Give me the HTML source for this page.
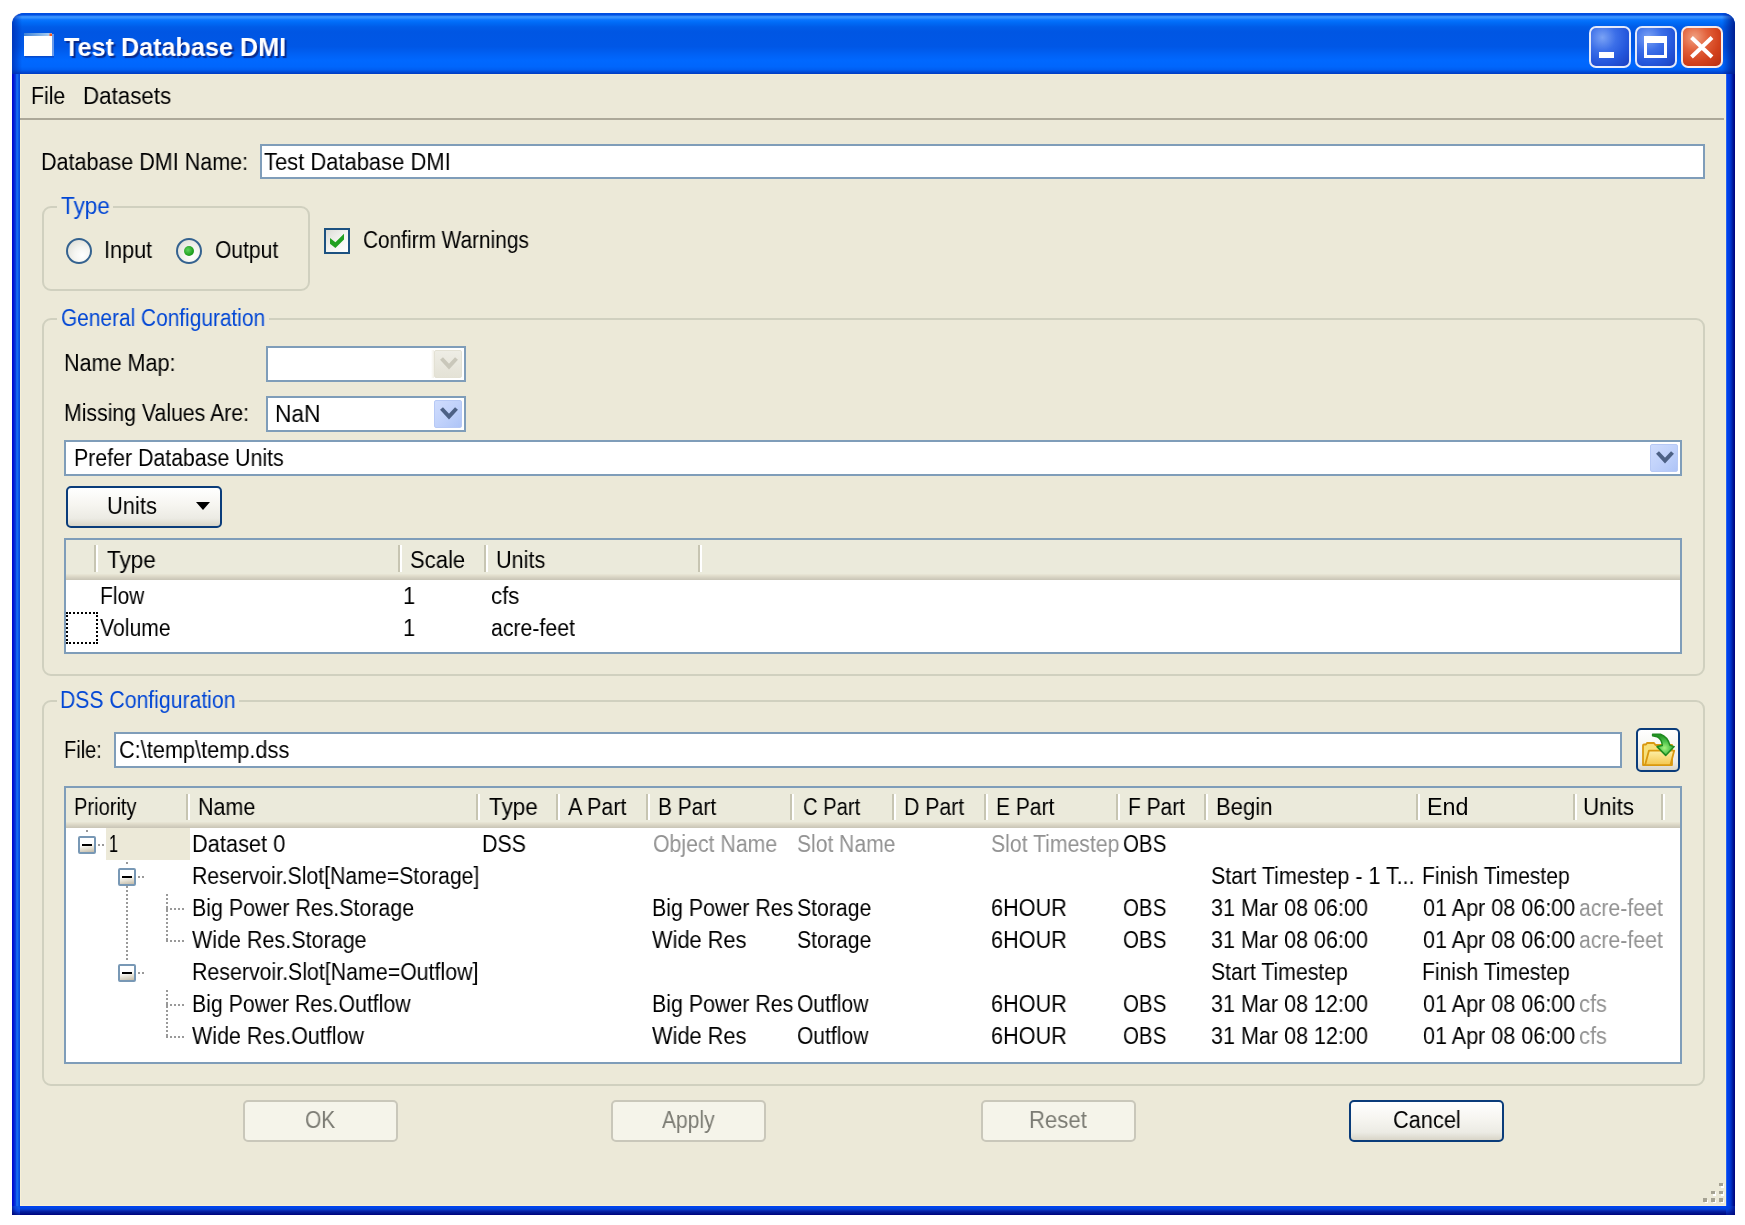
<!DOCTYPE html>
<html><head><meta charset="utf-8"><title>Test Database DMI</title>
<style>
html,body{margin:0;padding:0;}
body{width:1745px;height:1225px;background:#fff;position:relative;overflow:hidden;font-family:"Liberation Sans",sans-serif;}
body>div,body>svg,body>span{position:absolute;}
body>span{white-space:pre;transform-origin:0 0;will-change:transform;}
</style></head><body>
<div style="left:12px;top:13px;width:1723px;height:1202px;background:#0054e3;border-radius:12px 12px 0 0;"></div>
<div style="left:1726px;top:74px;width:9px;height:1141px;background:linear-gradient(to right,#3a78f0 0,#0040f0 15%,#003ee0 35%,#0032c8 55%,#001fa5 72%,#000c88 88%,#00007e 100%);"></div>
<div style="left:12px;top:74px;width:8px;height:1141px;background:linear-gradient(to right,#0006cf 0,#0019d6 20%,#0831d9 35%,#0a40de 48%,#166aee 58%,#166aee 70%,#0d55e6 82%,#0048e0 100%);"></div>
<div style="left:12px;top:1206px;width:1723px;height:9px;background:linear-gradient(to bottom,#0040f0 0,#0044ec 15%,#0042d8 35%,#0a2cb4 50%,#051ea0 62%,#00148c 80%,#00007e 100%);"></div>
<div style="left:1726px;top:1206px;width:9px;height:9px;background:radial-gradient(circle at 0 0,#0040f0 0,#0040d8 30%,#0a2cb4 50%,#051ea0 62%,#00148c 80%,#00007e 100%);"></div>
<div style="left:12px;top:1206px;width:8px;height:9px;background:radial-gradient(circle at 100% 0,#0048e0 0,#0d55e6 20%,#0a40de 45%,#0a2cb4 60%,#00148c 80%,#00007e 100%);"></div>
<div style="left:12px;top:13px;width:1723px;height:61px;background:linear-gradient(to bottom,#004ee0 0%,#0050e2 3%,#3d95ff 6%,#3391ff 8%,#0a75ff 11%,#006df8 15%,#005ce8 23%,#0056e3 31%,#0057e6 55%,#0061f5 68%,#0068ff 78%,#0066fc 88%,#005ef2 93%,#004cd8 96.5%,#003ec6 99%,#003ec6 100%);border-radius:12px 12px 0 0;"></div>
<div style="left:12px;top:13px;width:10px;height:61px;background:linear-gradient(to right,rgba(0,40,170,.7),rgba(0,60,200,0));border-radius:12px 0 0 0;"></div>
<div style="left:1722px;top:13px;width:13px;height:61px;background:linear-gradient(to left,rgba(0,20,130,.85),rgba(0,50,180,0));border-radius:0 12px 0 0;"></div>
<div style="left:20px;top:74px;width:1706px;height:1132px;background:#ece9d8;box-shadow:inset 1px -1px 0 #f8f0d6, inset -1px 1px 0 #f4edd4;"></div>
<svg style="left:23px;top:31px" width="33" height="28" viewBox="0 0 33 28"><defs><linearGradient id="ib" x1="0" x2="1" y1="0" y2="0"><stop offset="0" stop-color="#3b80d8"/><stop offset=".7" stop-color="#8fbbe9"/><stop offset="1" stop-color="#b5d3f2"/></linearGradient></defs><rect x="2" y="3" width="29" height="23.5" fill="#0a3aaf" opacity=".6"/><rect x="29" y="3" width="2" height="22" fill="#6a9bea"/><rect x="1" y="2" width="28" height="3.4" fill="url(#ib)"/><rect x="1" y="5" width="28" height="20" fill="#fff"/><rect x="26.5" y="2.5" width="2.5" height="2.5" fill="#ff5a1a"/></svg>
<div style="left:1589px;top:26px;width:42px;height:42px;background:radial-gradient(circle at 30% 25%,#7aa2f5 0,#3c6fe8 35%,#2457dc 65%,#1a3fc0 100%);border:2px solid rgba(255,255,255,.88);border-radius:7px;box-sizing:border-box;"></div>
<div style="left:1635px;top:26px;width:42px;height:42px;background:radial-gradient(circle at 30% 25%,#7aa2f5 0,#3c6fe8 35%,#2457dc 65%,#1a3fc0 100%);border:2px solid rgba(255,255,255,.88);border-radius:7px;box-sizing:border-box;"></div>
<div style="left:1681px;top:26px;width:42px;height:42px;background:radial-gradient(circle at 30% 25%,#f0a080 0,#e2603a 35%,#d2411c 65%,#b82e10 100%);border:2px solid rgba(255,255,255,.88);border-radius:7px;box-sizing:border-box;"></div>
<div style="left:1599px;top:52px;width:15px;height:6px;background:#fff;"></div>
<div style="left:1644px;top:36px;width:23px;height:22px;border:3px solid #fff;border-top-width:7px;box-sizing:border-box;"></div>
<svg style="left:1688px;top:34px" width="28" height="26" viewBox="0 0 28 26"><path d="M3.5 3.5 L24 23 M24 3.5 L3.5 23" stroke="#fff" stroke-width="4" stroke-linecap="butt"/></svg>
<div style="left:20px;top:118px;width:1704px;height:2px;background:#aca899;"></div>
<div style="left:260px;top:144px;width:1445px;height:35px;background:#fff;border:2px solid #7f9db9;box-sizing:border-box;"></div>
<div style="left:42px;top:206px;width:268px;height:85.4px;border:2px solid #d0d0bf;border-radius:9px;box-sizing:border-box;"></div>
<div style="left:57px;top:199px;width:56px;height:16px;background:#ece9d8;"></div>
<div style="left:66px;top:237.5px;width:26px;height:26px;border-radius:50%;border:2px solid #34628f;box-sizing:border-box;background:radial-gradient(circle at 65% 70%,#fff 0,#f4f4f0 40%,#d8d8d0 100%);"></div>
<div style="left:176px;top:237.5px;width:26px;height:26px;border-radius:50%;border:2px solid #34628f;box-sizing:border-box;background:radial-gradient(circle at 65% 70%,#fff 0,#f4f4f0 40%,#d8d8d0 100%);"></div>
<div style="left:184px;top:245.5px;width:10px;height:10px;border-radius:50%;background:radial-gradient(circle at 40% 40%,#5fd35f 0,#21a121 60%,#1a8a1a 100%);"></div>
<div style="left:324px;top:228px;width:26px;height:26px;border:2px solid #1c5180;box-sizing:border-box;background:linear-gradient(135deg,#dcdcd7 0,#f3f3ef 50%,#fff 100%);"></div>
<svg style="left:324px;top:228px" width="26" height="26" viewBox="0 0 26 26"><path d="M6 10 L6 15.8 L11.4 20 L20 11.4 L20 5.8 L11.4 14.3 Z" fill="#21a121"/></svg>
<div style="left:42px;top:317.5px;width:1662.5px;height:358.5px;border:2px solid #d0d0bf;border-radius:9px;box-sizing:border-box;"></div>
<div style="left:57px;top:309px;width:212px;height:18px;background:#ece9d8;"></div>
<div style="left:266px;top:346px;width:200px;height:36px;background:#fff;border:2px solid #7f9db9;box-sizing:border-box;"></div>
<div style="left:431px;top:350px;width:3px;height:28px;background:linear-gradient(to right,#fff,#f1efe6);"></div>
<div style="left:434px;top:350px;width:28px;height:28px;background:linear-gradient(to bottom,#eeede5,#e4e2d6);border-radius:2px;border:1px solid #e3e1d4;box-sizing:border-box;"></div>
<svg style="left:440px;top:357px" width="18" height="13" viewBox="0 0 18 13"><path d="M1.5 1.5 L9 9.5 L16.5 1.5" fill="none" stroke="#c9c7ba" stroke-width="4"/></svg>
<div style="left:266px;top:396px;width:200px;height:36px;background:#fff;border:2px solid #7f9db9;box-sizing:border-box;"></div>
<div style="left:434px;top:400px;width:28px;height:28px;background:linear-gradient(135deg,#cfdcfd 0,#c1d2fb 50%,#aec4f7 100%);border-radius:2px;border:1px solid #b7c9f5;box-sizing:border-box;"></div>
<svg style="left:440px;top:407px" width="18" height="13" viewBox="0 0 18 13"><path d="M1.5 1.5 L9 9.5 L16.5 1.5" fill="none" stroke="#4d6185" stroke-width="4"/></svg>
<div style="left:64px;top:440px;width:1618px;height:36px;background:#fff;border:2px solid #7f9db9;box-sizing:border-box;"></div>
<div style="left:1650px;top:444px;width:28px;height:28px;background:linear-gradient(135deg,#cfdcfd 0,#c1d2fb 50%,#aec4f7 100%);border-radius:2px;border:1px solid #b7c9f5;box-sizing:border-box;"></div>
<svg style="left:1656px;top:451px" width="18" height="13" viewBox="0 0 18 13"><path d="M1.5 1.5 L9 9.5 L16.5 1.5" fill="none" stroke="#4d6185" stroke-width="4"/></svg>
<div style="left:66px;top:485.7px;width:156.2px;height:42.3px;background:linear-gradient(to bottom,#fff 0,#f6f5f0 45%,#ecebe4 80%,#d9d5c8 100%);border:2px solid #0a3c7a;border-radius:5px;box-sizing:border-box;"></div>
<svg style="left:195px;top:501px" width="16" height="10" viewBox="0 0 16 10"><path d="M1 1 H15 L8 9 Z" fill="#000"/></svg>
<div style="left:64px;top:538px;width:1618px;height:116px;background:#fff;border:2px solid #7f9db9;box-sizing:border-box;"></div>
<div style="left:66px;top:540px;width:1614px;height:40px;background:linear-gradient(to bottom,#ebeadb 0,#ebeadb 34px,#e2decd 35px,#e2decd 36px,#d6d2c2 37px,#d6d2c2 38px,#cbc7b8 39px,#cbc7b8 40px);"></div>
<div style="left:94px;top:545px;width:2px;height:27px;background:#c7c5b2;"></div>
<div style="left:96px;top:545px;width:2px;height:27px;background:#fff;"></div>
<div style="left:398px;top:545px;width:2px;height:27px;background:#c7c5b2;"></div>
<div style="left:400px;top:545px;width:2px;height:27px;background:#fff;"></div>
<div style="left:484px;top:545px;width:2px;height:27px;background:#c7c5b2;"></div>
<div style="left:486px;top:545px;width:2px;height:27px;background:#fff;"></div>
<div style="left:698px;top:545px;width:2px;height:27px;background:#c7c5b2;"></div>
<div style="left:700px;top:545px;width:2px;height:27px;background:#fff;"></div>
<div style="left:66px;top:612px;width:32px;height:32px;border:2px dotted #000;box-sizing:border-box;"></div>
<div style="left:42px;top:700px;width:1662.5px;height:386px;border:2px solid #d0d0bf;border-radius:9px;box-sizing:border-box;"></div>
<div style="left:57px;top:691px;width:182px;height:18px;background:#ece9d8;"></div>
<div style="left:114px;top:732px;width:1508px;height:36px;background:#fff;border:2px solid #7f9db9;box-sizing:border-box;"></div>
<div style="left:1636px;top:728px;width:44px;height:44px;background:linear-gradient(to bottom,#fff 0,#f6f5f0 45%,#ecebe4 80%,#d9d5c8 100%);border:2px solid #0a3c7a;border-radius:5px;box-sizing:border-box;"></div>
<svg style="left:1636px;top:728px" width="44" height="44" viewBox="0 0 44 44">
<defs><linearGradient id="ff" x1="0" x2="0" y1="0" y2="1"><stop offset="0" stop-color="#fdf0a8"/><stop offset="1" stop-color="#f4c64e"/></linearGradient>
<radialGradient id="ga" cx=".55" cy=".65" r=".6"><stop offset="0" stop-color="#a4f27e"/><stop offset=".5" stop-color="#4cc24c"/><stop offset="1" stop-color="#259425"/></radialGradient></defs>
<path d="M7 37 V17.5 Q7 16.5 8 16.5 H10 L11 15 H18 L19.5 17 H36 V37 Z" fill="#f7e07a" stroke="#d9980f" stroke-width="1.8" stroke-linejoin="round"/>
<path d="M9 37.2 L13 22.6 H38.2 L34.4 37.2 Z" fill="url(#ff)" stroke="#d9980f" stroke-width="1.8" stroke-linejoin="round"/>
<path d="M16.6 6.2 L24.5 6.2 Q31.5 8.5 34 17.4 L38.2 18.6 L29.7 27.4 L21 18.6 L26.3 17.6 Q26 11.5 21 8.7 L16.6 7.7 Z" fill="url(#ga)" stroke="#1f8a1f" stroke-width="1.5" stroke-linejoin="round"/>
</svg>
<div style="left:64px;top:786px;width:1618px;height:278px;background:#fff;border:2px solid #7f9db9;box-sizing:border-box;"></div>
<div style="left:66px;top:788px;width:1614px;height:40px;background:linear-gradient(to bottom,#ebeadb 0,#ebeadb 34px,#e2decd 35px,#e2decd 36px,#d6d2c2 37px,#d6d2c2 38px,#cbc7b8 39px,#cbc7b8 40px);"></div>
<div style="left:186px;top:794px;width:2px;height:26px;background:#c7c5b2;"></div>
<div style="left:188px;top:794px;width:2px;height:26px;background:#fff;"></div>
<div style="left:476px;top:794px;width:2px;height:26px;background:#c7c5b2;"></div>
<div style="left:478px;top:794px;width:2px;height:26px;background:#fff;"></div>
<div style="left:556px;top:794px;width:2px;height:26px;background:#c7c5b2;"></div>
<div style="left:558px;top:794px;width:2px;height:26px;background:#fff;"></div>
<div style="left:646px;top:794px;width:2px;height:26px;background:#c7c5b2;"></div>
<div style="left:648px;top:794px;width:2px;height:26px;background:#fff;"></div>
<div style="left:790px;top:794px;width:2px;height:26px;background:#c7c5b2;"></div>
<div style="left:792px;top:794px;width:2px;height:26px;background:#fff;"></div>
<div style="left:892px;top:794px;width:2px;height:26px;background:#c7c5b2;"></div>
<div style="left:894px;top:794px;width:2px;height:26px;background:#fff;"></div>
<div style="left:984px;top:794px;width:2px;height:26px;background:#c7c5b2;"></div>
<div style="left:986px;top:794px;width:2px;height:26px;background:#fff;"></div>
<div style="left:1116px;top:794px;width:2px;height:26px;background:#c7c5b2;"></div>
<div style="left:1118px;top:794px;width:2px;height:26px;background:#fff;"></div>
<div style="left:1204px;top:794px;width:2px;height:26px;background:#c7c5b2;"></div>
<div style="left:1206px;top:794px;width:2px;height:26px;background:#fff;"></div>
<div style="left:1416px;top:794px;width:2px;height:26px;background:#c7c5b2;"></div>
<div style="left:1418px;top:794px;width:2px;height:26px;background:#fff;"></div>
<div style="left:1573px;top:794px;width:2px;height:26px;background:#c7c5b2;"></div>
<div style="left:1575px;top:794px;width:2px;height:26px;background:#fff;"></div>
<div style="left:1661px;top:794px;width:2px;height:26px;background:#c7c5b2;"></div>
<div style="left:1663px;top:794px;width:2px;height:26px;background:#fff;"></div>
<div style="left:106px;top:828px;width:84px;height:32px;background:#ece9d8;"></div>
<div style="left:78px;top:836px;width:18px;height:18px;border:2px solid #7898b5;border-radius:2px;box-sizing:border-box;background:linear-gradient(170deg,#fff 0,#fff 45%,#e6e2d6 70%,#c2baa8 100%);"></div>
<div style="left:82px;top:843.5px;width:10px;height:2.6px;background:#000;"></div>
<div style="left:98px;top:844px;width:8px;height:2px;background:repeating-linear-gradient(to right,#999 0,#999 2px,transparent 2px,transparent 4px);"></div>
<div style="left:86px;top:830px;width:2px;height:2px;background:#999;"></div>
<div style="left:118px;top:868px;width:18px;height:18px;border:2px solid #7898b5;border-radius:2px;box-sizing:border-box;background:linear-gradient(170deg,#fff 0,#fff 45%,#e6e2d6 70%,#c2baa8 100%);"></div>
<div style="left:122px;top:875.5px;width:10px;height:2.6px;background:#000;"></div>
<div style="left:138px;top:876px;width:8px;height:2px;background:repeating-linear-gradient(to right,#999 0,#999 2px,transparent 2px,transparent 4px);"></div>
<div style="left:126px;top:862px;width:2px;height:2px;background:#999;"></div>
<div style="left:118px;top:964px;width:18px;height:18px;border:2px solid #7898b5;border-radius:2px;box-sizing:border-box;background:linear-gradient(170deg,#fff 0,#fff 45%,#e6e2d6 70%,#c2baa8 100%);"></div>
<div style="left:122px;top:971.5px;width:10px;height:2.6px;background:#000;"></div>
<div style="left:138px;top:972px;width:8px;height:2px;background:repeating-linear-gradient(to right,#999 0,#999 2px,transparent 2px,transparent 4px);"></div>
<div style="left:126px;top:886px;width:2px;height:76px;background:repeating-linear-gradient(to bottom,#999 0,#999 2px,transparent 2px,transparent 4px);"></div>
<div style="left:166px;top:894px;width:2px;height:48px;background:repeating-linear-gradient(to bottom,#999 0,#999 2px,transparent 2px,transparent 4px);"></div>
<div style="left:166px;top:908px;width:18px;height:2px;background:repeating-linear-gradient(to right,#999 0,#999 2px,transparent 2px,transparent 4px);"></div>
<div style="left:166px;top:940px;width:18px;height:2px;background:repeating-linear-gradient(to right,#999 0,#999 2px,transparent 2px,transparent 4px);"></div>
<div style="left:166px;top:990px;width:2px;height:48px;background:repeating-linear-gradient(to bottom,#999 0,#999 2px,transparent 2px,transparent 4px);"></div>
<div style="left:166px;top:1004px;width:18px;height:2px;background:repeating-linear-gradient(to right,#999 0,#999 2px,transparent 2px,transparent 4px);"></div>
<div style="left:166px;top:1036px;width:18px;height:2px;background:repeating-linear-gradient(to right,#999 0,#999 2px,transparent 2px,transparent 4px);"></div>
<div style="left:243px;top:1100px;width:155px;height:42px;background:#f5f4ea;border:2px solid #c9c7ba;border-radius:5px;box-sizing:border-box;"></div>
<div style="left:611px;top:1100px;width:155px;height:42px;background:#f5f4ea;border:2px solid #c9c7ba;border-radius:5px;box-sizing:border-box;"></div>
<div style="left:981px;top:1100px;width:155px;height:42px;background:#f5f4ea;border:2px solid #c9c7ba;border-radius:5px;box-sizing:border-box;"></div>
<div style="left:1348.5px;top:1100px;width:155.5px;height:42px;background:linear-gradient(to bottom,#fff 0,#f6f5f0 45%,#ecebe4 80%,#d9d5c8 100%);border:2px solid #0a3c7a;border-radius:5px;box-sizing:border-box;"></div>
<div style="left:1720.5px;top:1184.0px;width:3.5px;height:3.5px;background:#fff;"></div>
<div style="left:1719px;top:1182.5px;width:3.5px;height:3.5px;background:#a5a293;"></div>
<div style="left:1712.5px;top:1192.0px;width:3.5px;height:3.5px;background:#fff;"></div>
<div style="left:1711px;top:1190.5px;width:3.5px;height:3.5px;background:#a5a293;"></div>
<div style="left:1720.5px;top:1192.0px;width:3.5px;height:3.5px;background:#fff;"></div>
<div style="left:1719px;top:1190.5px;width:3.5px;height:3.5px;background:#a5a293;"></div>
<div style="left:1704.5px;top:1199.5px;width:3.5px;height:3.5px;background:#fff;"></div>
<div style="left:1703px;top:1198px;width:3.5px;height:3.5px;background:#a5a293;"></div>
<div style="left:1712.5px;top:1199.5px;width:3.5px;height:3.5px;background:#fff;"></div>
<div style="left:1711px;top:1198px;width:3.5px;height:3.5px;background:#a5a293;"></div>
<div style="left:1720.5px;top:1199.5px;width:3.5px;height:3.5px;background:#fff;"></div>
<div style="left:1719px;top:1198px;width:3.5px;height:3.5px;background:#a5a293;"></div>
<span style="left:64.40px;top:34.27px;font-size:26.5px;line-height:26.5px;color:#fff;transform:scaleX(0.9509);font-weight:bold;text-shadow:2px 2px 1px #0a2a8a;">Test Database DMI</span>
<span style="left:31.18px;top:84.78px;font-size:23.3px;line-height:23.3px;color:#000;transform:scaleX(0.9118);">File</span>
<span style="left:83.08px;top:84.78px;font-size:23.3px;line-height:23.3px;color:#000;transform:scaleX(0.9596);">Datasets</span>
<span style="left:41.15px;top:151.28px;font-size:23.3px;line-height:23.3px;color:#000;transform:scaleX(0.9245);">Database DMI Name:</span>
<span style="left:264.06px;top:151.28px;font-size:23.3px;line-height:23.3px;color:#000;transform:scaleX(0.9421);">Test Database DMI</span>
<span style="left:61.03px;top:194.78px;font-size:23.3px;line-height:23.3px;color:#0046d5;transform:scaleX(0.9667);">Type</span>
<span style="left:103.94px;top:239.28px;font-size:23.3px;line-height:23.3px;color:#000;transform:scaleX(0.9280);">Input</span>
<span style="left:214.70px;top:239.28px;font-size:23.3px;line-height:23.3px;color:#000;transform:scaleX(0.9043);">Output</span>
<span style="left:362.71px;top:229.28px;font-size:23.3px;line-height:23.3px;color:#000;transform:scaleX(0.8935);">Confirm Warnings</span>
<span style="left:60.70px;top:306.78px;font-size:23.3px;line-height:23.3px;color:#0046d5;transform:scaleX(0.8956);">General Configuration</span>
<span style="left:63.75px;top:352.28px;font-size:23.3px;line-height:23.3px;color:#000;transform:scaleX(0.9259);">Name Map:</span>
<span style="left:63.78px;top:402.28px;font-size:23.3px;line-height:23.3px;color:#000;transform:scaleX(0.9116);">Missing Values Are:</span>
<span style="left:275.05px;top:402.78px;font-size:23.3px;line-height:23.3px;color:#000;transform:scaleX(0.9767);">NaN</span>
<span style="left:73.77px;top:447.28px;font-size:23.3px;line-height:23.3px;color:#000;transform:scaleX(0.9150);">Prefer Database Units</span>
<span style="left:107.12px;top:494.78px;font-size:23.3px;line-height:23.3px;color:#000;transform:scaleX(0.9400);">Units</span>
<span style="left:107.03px;top:548.78px;font-size:23.3px;line-height:23.3px;color:#000;transform:scaleX(0.9667);">Type</span>
<span style="left:410.05px;top:549.28px;font-size:23.3px;line-height:23.3px;color:#000;transform:scaleX(0.9464);">Scale</span>
<span style="left:495.74px;top:549.28px;font-size:23.3px;line-height:23.3px;color:#000;transform:scaleX(0.9280);">Units</span>
<span style="left:99.80px;top:584.78px;font-size:23.3px;line-height:23.3px;color:#000;transform:scaleX(0.9021);">Flow</span>
<span style="left:100.00px;top:617.28px;font-size:23.3px;line-height:23.3px;color:#000;transform:scaleX(0.9091);">Volume</span>
<span style="left:403.12px;top:584.78px;font-size:23.3px;line-height:23.3px;color:#000;transform:scaleX(0.9400);">1</span>
<span style="left:403.12px;top:617.28px;font-size:23.3px;line-height:23.3px;color:#000;transform:scaleX(0.9400);">1</span>
<span style="left:490.65px;top:584.78px;font-size:23.3px;line-height:23.3px;color:#000;transform:scaleX(0.9536);">cfs</span>
<span style="left:490.69px;top:617.28px;font-size:23.3px;line-height:23.3px;color:#000;transform:scaleX(0.9132);">acre-feet</span>
<span style="left:59.78px;top:689.28px;font-size:23.3px;line-height:23.3px;color:#0046d5;transform:scaleX(0.9095);">DSS Configuration</span>
<span style="left:63.88px;top:739.28px;font-size:23.3px;line-height:23.3px;color:#000;transform:scaleX(0.8600);">File:</span>
<span style="left:118.67px;top:739.28px;font-size:23.3px;line-height:23.3px;color:#000;transform:scaleX(0.9326);">C:\temp\temp.dss</span>
<span style="left:73.87px;top:796.48px;font-size:23.3px;line-height:23.3px;color:#000;transform:scaleX(0.8629);">Priority</span>
<span style="left:197.76px;top:796.48px;font-size:23.3px;line-height:23.3px;color:#000;transform:scaleX(0.9220);">Name</span>
<span style="left:489.03px;top:796.48px;font-size:23.3px;line-height:23.3px;color:#000;transform:scaleX(0.9667);">Type</span>
<span style="left:568.00px;top:796.48px;font-size:23.3px;line-height:23.3px;color:#000;transform:scaleX(0.9206);">A Part</span>
<span style="left:657.60px;top:796.48px;font-size:23.3px;line-height:23.3px;color:#000;transform:scaleX(0.8984);">B Part</span>
<span style="left:802.73px;top:796.48px;font-size:23.3px;line-height:23.3px;color:#000;transform:scaleX(0.8677);">C Part</span>
<span style="left:903.77px;top:796.48px;font-size:23.3px;line-height:23.3px;color:#000;transform:scaleX(0.9125);">D Part</span>
<span style="left:995.80px;top:796.48px;font-size:23.3px;line-height:23.3px;color:#000;transform:scaleX(0.9016);">E Part</span>
<span style="left:1127.80px;top:796.48px;font-size:23.3px;line-height:23.3px;color:#000;transform:scaleX(0.8984);">F Part</span>
<span style="left:1216.11px;top:796.48px;font-size:23.3px;line-height:23.3px;color:#000;transform:scaleX(0.9464);">Begin</span>
<span style="left:1427.00px;top:796.48px;font-size:23.3px;line-height:23.3px;color:#000;transform:scaleX(1.0000);">End</span>
<span style="left:1583.08px;top:796.48px;font-size:23.3px;line-height:23.3px;color:#000;transform:scaleX(0.9600);">Units</span>
<span style="left:108.60px;top:833.28px;font-size:23.3px;line-height:23.3px;color:#000;transform:scaleX(0.7000);">1</span>
<span style="left:191.73px;top:833.28px;font-size:23.3px;line-height:23.3px;color:#000;transform:scaleX(0.9361);">Dataset 0</span>
<span style="left:481.76px;top:833.28px;font-size:23.3px;line-height:23.3px;color:#000;transform:scaleX(0.9200);">DSS</span>
<span style="left:652.69px;top:833.28px;font-size:23.3px;line-height:23.3px;color:#929292;transform:scaleX(0.9134);">Object Name</span>
<span style="left:796.70px;top:833.28px;font-size:23.3px;line-height:23.3px;color:#929292;transform:scaleX(0.9047);">Slot Name</span>
<span style="left:990.69px;top:833.28px;font-size:23.3px;line-height:23.3px;color:#929292;transform:scaleX(0.9094);">Slot Timestep</span>
<span style="left:1122.72px;top:833.28px;font-size:23.3px;line-height:23.3px;color:#000;transform:scaleX(0.8809);">OBS</span>
<span style="left:191.78px;top:865.28px;font-size:23.3px;line-height:23.3px;color:#000;transform:scaleX(0.9115);">Reservoir.Slot[Name=Storage]</span>
<span style="left:1210.68px;top:865.28px;font-size:23.3px;line-height:23.3px;color:#000;transform:scaleX(0.9211);">Start Timestep - 1 T...</span>
<span style="left:1421.79px;top:865.28px;font-size:23.3px;line-height:23.3px;color:#000;transform:scaleX(0.9050);">Finish Timestep</span>
<span style="left:191.77px;top:961.28px;font-size:23.3px;line-height:23.3px;color:#000;transform:scaleX(0.9159);">Reservoir.Slot[Name=Outflow]</span>
<span style="left:1210.69px;top:961.28px;font-size:23.3px;line-height:23.3px;color:#000;transform:scaleX(0.9108);">Start Timestep</span>
<span style="left:1421.79px;top:961.28px;font-size:23.3px;line-height:23.3px;color:#000;transform:scaleX(0.9050);">Finish Timestep</span>
<span style="left:191.77px;top:897.28px;font-size:23.3px;line-height:23.3px;color:#000;transform:scaleX(0.9172);">Big Power Res.Storage</span>
<span style="left:651.77px;top:897.28px;font-size:23.3px;line-height:23.3px;color:#000;transform:scaleX(0.9166);">Big Power Res</span>
<span style="left:796.69px;top:897.28px;font-size:23.3px;line-height:23.3px;color:#000;transform:scaleX(0.9100);">Storage</span>
<span style="left:990.67px;top:897.28px;font-size:23.3px;line-height:23.3px;color:#000;transform:scaleX(0.9291);">6HOUR</span>
<span style="left:1122.72px;top:897.28px;font-size:23.3px;line-height:23.3px;color:#000;transform:scaleX(0.8809);">OBS</span>
<span style="left:1210.67px;top:897.28px;font-size:23.3px;line-height:23.3px;color:#000;transform:scaleX(0.9250);">31 Mar 08 06:00</span>
<span style="left:1422.67px;top:897.28px;font-size:23.3px;line-height:23.3px;color:#000;transform:scaleX(0.9252);">01 Apr 08 06:00</span>
<span style="left:1579.09px;top:897.28px;font-size:23.3px;line-height:23.3px;color:#929292;transform:scaleX(0.9121);">acre-feet</span>
<span style="left:192.40px;top:929.28px;font-size:23.3px;line-height:23.3px;color:#000;transform:scaleX(0.9234);">Wide Res.Storage</span>
<span style="left:652.40px;top:929.28px;font-size:23.3px;line-height:23.3px;color:#000;transform:scaleX(0.9360);">Wide Res</span>
<span style="left:796.69px;top:929.28px;font-size:23.3px;line-height:23.3px;color:#000;transform:scaleX(0.9100);">Storage</span>
<span style="left:990.67px;top:929.28px;font-size:23.3px;line-height:23.3px;color:#000;transform:scaleX(0.9291);">6HOUR</span>
<span style="left:1122.72px;top:929.28px;font-size:23.3px;line-height:23.3px;color:#000;transform:scaleX(0.8809);">OBS</span>
<span style="left:1210.67px;top:929.28px;font-size:23.3px;line-height:23.3px;color:#000;transform:scaleX(0.9250);">31 Mar 08 06:00</span>
<span style="left:1422.67px;top:929.28px;font-size:23.3px;line-height:23.3px;color:#000;transform:scaleX(0.9252);">01 Apr 08 06:00</span>
<span style="left:1579.09px;top:929.28px;font-size:23.3px;line-height:23.3px;color:#929292;transform:scaleX(0.9121);">acre-feet</span>
<span style="left:191.77px;top:993.28px;font-size:23.3px;line-height:23.3px;color:#000;transform:scaleX(0.9126);">Big Power Res.Outflow</span>
<span style="left:651.77px;top:993.28px;font-size:23.3px;line-height:23.3px;color:#000;transform:scaleX(0.9166);">Big Power Res</span>
<span style="left:796.70px;top:993.28px;font-size:23.3px;line-height:23.3px;color:#000;transform:scaleX(0.9026);">Outflow</span>
<span style="left:990.67px;top:993.28px;font-size:23.3px;line-height:23.3px;color:#000;transform:scaleX(0.9291);">6HOUR</span>
<span style="left:1122.72px;top:993.28px;font-size:23.3px;line-height:23.3px;color:#000;transform:scaleX(0.8809);">OBS</span>
<span style="left:1210.67px;top:993.28px;font-size:23.3px;line-height:23.3px;color:#000;transform:scaleX(0.9250);">31 Mar 08 12:00</span>
<span style="left:1422.67px;top:993.28px;font-size:23.3px;line-height:23.3px;color:#000;transform:scaleX(0.9252);">01 Apr 08 06:00</span>
<span style="left:1579.06px;top:993.28px;font-size:23.3px;line-height:23.3px;color:#929292;transform:scaleX(0.9393);">cfs</span>
<span style="left:192.40px;top:1025.28px;font-size:23.3px;line-height:23.3px;color:#000;transform:scaleX(0.9226);">Wide Res.Outflow</span>
<span style="left:652.40px;top:1025.28px;font-size:23.3px;line-height:23.3px;color:#000;transform:scaleX(0.9360);">Wide Res</span>
<span style="left:796.70px;top:1025.28px;font-size:23.3px;line-height:23.3px;color:#000;transform:scaleX(0.9026);">Outflow</span>
<span style="left:990.67px;top:1025.28px;font-size:23.3px;line-height:23.3px;color:#000;transform:scaleX(0.9291);">6HOUR</span>
<span style="left:1122.72px;top:1025.28px;font-size:23.3px;line-height:23.3px;color:#000;transform:scaleX(0.8809);">OBS</span>
<span style="left:1210.67px;top:1025.28px;font-size:23.3px;line-height:23.3px;color:#000;transform:scaleX(0.9250);">31 Mar 08 12:00</span>
<span style="left:1422.67px;top:1025.28px;font-size:23.3px;line-height:23.3px;color:#000;transform:scaleX(0.9252);">01 Apr 08 06:00</span>
<span style="left:1579.06px;top:1025.28px;font-size:23.3px;line-height:23.3px;color:#929292;transform:scaleX(0.9393);">cfs</span>
<span style="left:304.70px;top:1109.28px;font-size:23.3px;line-height:23.3px;color:#7c7c74;transform:scaleX(0.9000);">OK</span>
<span style="left:662.00px;top:1109.28px;font-size:23.3px;line-height:23.3px;color:#7c7c74;transform:scaleX(0.9017);">Apply</span>
<span style="left:1029.10px;top:1109.28px;font-size:23.3px;line-height:23.3px;color:#7c7c74;transform:scaleX(0.9492);">Reset</span>
<span style="left:1392.67px;top:1109.28px;font-size:23.3px;line-height:23.3px;color:#000;transform:scaleX(0.9343);">Cancel</span>
</body></html>
